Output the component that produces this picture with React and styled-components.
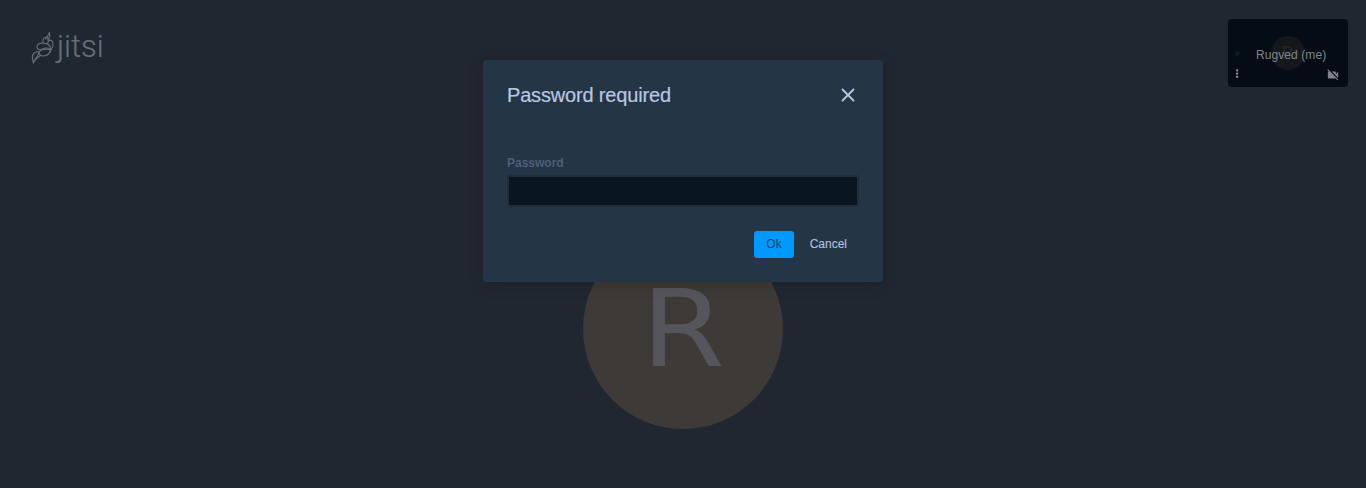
import React from 'react';
import styled, { createGlobalStyle } from 'styled-components';

const Global = createGlobalStyle`
  * { box-sizing: border-box; }
  body { margin: 0; background: #212730; font-family: "Liberation Sans", Arial, sans-serif; overflow: hidden; }
`;

const Stage = styled.div`
  position: relative;
  height: 488px;
  display: flex;
  flex-direction: column;
  align-items: center;
`;

const TopBar = styled.header`
  width: 100%;
  height: 229px;
  display: flex;
  align-items: flex-start;
  justify-content: space-between;
  padding: 19px 18px 0 30px;
`;

const Logo = styled.div`
  display: flex;
  align-items: flex-start;
  padding-top: 11px;
  color: #666e78;
`;

const LogoText = styled.span`
  font: 300 31px/32px Roboto, "Open Sans", sans-serif;
  margin: 1px 0 0 1px;
  -webkit-text-stroke: 0.2px currentColor;
`;

const Avatar = styled.div`
  flex: none;
  width: 200px;
  height: 200px;
  border-radius: 50%;
  background: #3e3a37;
  color: #55565c;
  font-family: "DejaVu Sans", Verdana, sans-serif;
  font-size: 106.67px;
  line-height: 201px;
  text-align: center;
`;

const Initial = styled.span`
  display: inline-block;
  transform: scaleX(1.13);
`;

const Thumbnail = styled.div`
  position: relative;
  width: 120px;
  height: 68px;
  border-radius: 4px;
  background: #050c15;
  display: flex;
  flex-direction: column;
  justify-content: space-between;
  padding: 28px 9px 6px 7px;
  color: #81868e;
`;

const MiniAvatar = styled.div`
  position: absolute;
  left: 43px;
  top: 17px;
  width: 34px;
  height: 34px;
  border-radius: 50%;
  background: #15181b;
  color: #22262d;
  font-family: "DejaVu Sans", Verdana, sans-serif;
  font-size: 18px;
  line-height: 33px;
  text-align: center;
`;

const NameRow = styled.div`
  position: relative;
  display: flex;
  align-items: center;
  height: 16px;
  font-size: 12px;
  line-height: 16px;
  letter-spacing: 0.08px;
  color: #81868e;
`;

const SpeakerDot = styled.i`
  width: 5px;
  height: 5px;
  border-radius: 50%;
  background: #061a2d;
  margin: -3px 16px 0 0;
`;

const IconRow = styled.div`
  display: flex;
  justify-content: space-between;
  align-items: flex-end;
  svg { display: block; }
`;

const Overlay = styled.div`
  position: absolute;
  inset: 0;
  display: flex;
  justify-content: center;
  align-items: flex-start;
  padding-top: 60px;
`;

const Dialog = styled.section`
  width: 400px;
  height: 222px;
  padding: 24px;
  border-radius: 3px;
  background: #243546;
  box-shadow: 0 0 1px rgba(9, 12, 20, .2), 0 3px 16px rgba(9, 12, 20, .15);
  display: flex;
  flex-direction: column;
`;

const DialogHeader = styled.div`
  display: flex;
  align-items: center;
  justify-content: space-between;
  height: 22px;
  padding-right: 4px;
  color: #b8c7e0;
`;

const Title = styled.h1`
  margin: 0;
  font-size: 20px;
  font-weight: 400;
  line-height: 22px;
  letter-spacing: -0.17px;
  -webkit-text-stroke: 0.2px currentColor;
`;

const Label = styled.label`
  margin-top: 49px;
  font-size: 12px;
  font-weight: 700;
  line-height: 16px;
  color: #4f5e77;
`;

const Input = styled.input`
  margin: 4px 0 0;
  width: 352px;
  height: 32px;
  border: 2px solid #202d3d;
  border-radius: 3px;
  background: #091622;
  outline: none;
`;

const Actions = styled.div`
  display: flex;
  justify-content: flex-end;
  gap: 4px;
  margin-top: 24px;
`;

const Button = styled.button`
  height: 27px;
  padding: 0 12px;
  border: 0;
  border-radius: 3px;
  font: 12px/27px "Liberation Sans", Arial, sans-serif;
  background: ${p => (p.$primary ? '#0099ff' : 'transparent')};
  color: ${p => (p.$primary ? '#1a4a75' : '#b0bfd8')};
  -webkit-text-stroke: 0.15px currentColor;
`;

export default function App() {
  return (
    <Stage>
      <Global />
      <TopBar>
        <Logo>
          <svg width="26" height="36" viewBox="0 0 26 36" fill="none" stroke="currentColor" strokeWidth="1.1" strokeLinejoin="round" strokeLinecap="round">
            <path d="M19.2 2.5c.6 3-3.6 4-3.4 6.6M19.2 2.5c2 3.4-.2 5-1.6 7.4" />
            <path d="M13 9.4c.4-2.2 3.6-2.6 5.4-1 1.2 1.2.6 4.4-1.8 5.2-2.6.4-4.4-1.6-3.6-4.2z" />
            <path d="M18.6 10.4c2.4-.8 4.6.6 4.4 3.8-.2 3.6-1.4 5.6-3 7.6" />
            <path d="M13 13.2c-3.6-.6-6.4 1.4-6 4.2.4 2.4 3 2.8 5 1.8 3-1.4 6.4-1.6 9 .4" />
            <path d="M20.6 19.6c-.6 3.6-3.6 6.2-7.4 6.4-3.4 0-5-2.2-3.8-4.2 2-2.6 7.4-2.8 11.2-2.2M16.6 13.6c2.4.6 4 2.6 4 6" />
            <path d="M9.4 21.8c-4-.4-7.2 1.8-7 5.4 0 2.4.6 4 1 5.8.4-4.2 3-4.4 4.4-7.6.6-1.4.6-2.6 1.6-3.6M3.4 33c.6-3 3.6-4.6 6.8-7.4" />
          </svg>
          <LogoText>jitsi</LogoText>
        </Logo>
        <Thumbnail>
          <MiniAvatar>R</MiniAvatar>
          <NameRow><SpeakerDot />Rugved (me)</NameRow>
          <IconRow>
            <svg width="4" height="12" viewBox="0 0 4 12" fill="currentColor">
              <rect x="1" y="0.3" width="2.2" height="2.2" rx="0.6" /><rect x="1" y="3.5" width="2.2" height="2.2" rx="0.6" /><rect x="1" y="6.7" width="2.2" height="2.2" rx="0.6" />
            </svg>
            <svg width="12" height="12" viewBox="1.5 1.5 21 21" fill="currentColor">
              <path d="M21 6.5l-4 4V7c0-.55-.45-1-1-1H9.82L21 17.18V6.5zM3.27 2L2 3.27 4.73 6H4c-.55 0-1 .45-1 1v10c0 .55.45 1 1 1h12c.21 0 .39-.08.54-.18L19.73 21 21 19.73 3.27 2z" />
            </svg>
          </IconRow>
        </Thumbnail>
      </TopBar>
      <Avatar><Initial>R</Initial></Avatar>
      <Overlay>
        <Dialog role="dialog" aria-labelledby="dialog-title">
          <DialogHeader>
            <Title id="dialog-title">Password required</Title>
            <svg width="14" height="14" viewBox="0 0 14 14" fill="none" stroke="currentColor" strokeWidth="1.8" strokeLinecap="round">
              <path d="M1.5 1.5l11 11M12.5 1.5l-11 11" />
            </svg>
          </DialogHeader>
          <Label htmlFor="password">Password</Label>
          <Input id="password" type="password" />
          <Actions>
            <Button $primary>Ok</Button>
            <Button>Cancel</Button>
          </Actions>
        </Dialog>
      </Overlay>
    </Stage>
  );
}
